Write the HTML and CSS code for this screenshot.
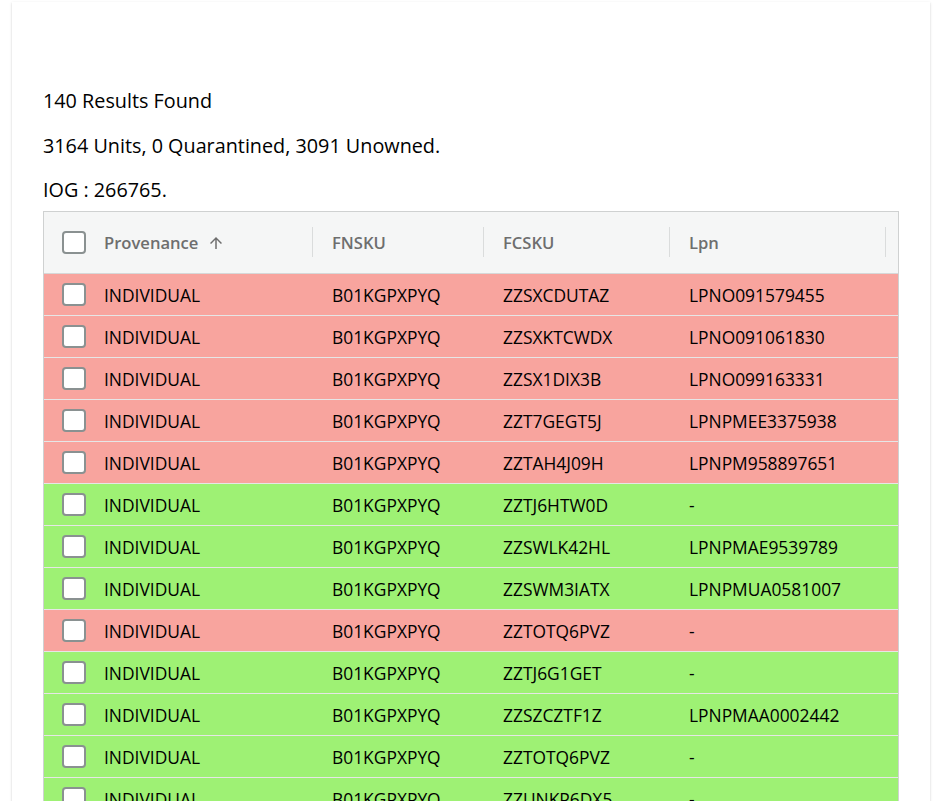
FILE: index.html
```html
<!DOCTYPE html>
<html>
<head>
<meta charset="utf-8">
<link rel="stylesheet" href="styles.css">
</head>
<body>
<div class="page">
  <div class="card">
    <div class="summary">
      <p>140 Results Found</p>
      <p>3164 Units, 0 Quarantined, 3091 Unowned.</p>
      <p>IOG : 266765.</p>
    </div>
    <div class="grid">
      <div class="row head">
        <div class="cell c-check"><span class="box"></span></div>
        <div class="cell c-prov">Provenance<svg class="arrow" viewBox="0 0 24 24" width="18" height="18"><path d="M4 12l1.41 1.41L11 7.83V20h2V7.83l5.58 5.59L20 12l-8-8-8 8z"/></svg><span class="sep"></span></div>
        <div class="cell c-fnsku">FNSKU<span class="sep"></span></div>
        <div class="cell c-fcsku">FCSKU<span class="sep"></span></div>
        <div class="cell c-lpn">Lpn<span class="sep"></span></div>
      </div>
      <div class="row red"><div class="cell c-check"><span class="box"></span></div><div class="cell c-prov">INDIVIDUAL</div><div class="cell c-fnsku">B01KGPXPYQ</div><div class="cell c-fcsku">ZZSXCDUTAZ</div><div class="cell c-lpn">LPNO091579455</div></div>
      <div class="row red"><div class="cell c-check"><span class="box"></span></div><div class="cell c-prov">INDIVIDUAL</div><div class="cell c-fnsku">B01KGPXPYQ</div><div class="cell c-fcsku">ZZSXKTCWDX</div><div class="cell c-lpn">LPNO091061830</div></div>
      <div class="row red"><div class="cell c-check"><span class="box"></span></div><div class="cell c-prov">INDIVIDUAL</div><div class="cell c-fnsku">B01KGPXPYQ</div><div class="cell c-fcsku">ZZSX1DIX3B</div><div class="cell c-lpn">LPNO099163331</div></div>
      <div class="row red"><div class="cell c-check"><span class="box"></span></div><div class="cell c-prov">INDIVIDUAL</div><div class="cell c-fnsku">B01KGPXPYQ</div><div class="cell c-fcsku">ZZT7GEGT5J</div><div class="cell c-lpn">LPNPMEE3375938</div></div>
      <div class="row red"><div class="cell c-check"><span class="box"></span></div><div class="cell c-prov">INDIVIDUAL</div><div class="cell c-fnsku">B01KGPXPYQ</div><div class="cell c-fcsku">ZZTAH4J09H</div><div class="cell c-lpn">LPNPM958897651</div></div>
      <div class="row green"><div class="cell c-check"><span class="box"></span></div><div class="cell c-prov">INDIVIDUAL</div><div class="cell c-fnsku">B01KGPXPYQ</div><div class="cell c-fcsku">ZZTJ6HTW0D</div><div class="cell c-lpn">-</div></div>
      <div class="row green"><div class="cell c-check"><span class="box"></span></div><div class="cell c-prov">INDIVIDUAL</div><div class="cell c-fnsku">B01KGPXPYQ</div><div class="cell c-fcsku">ZZSWLK42HL</div><div class="cell c-lpn">LPNPMAE9539789</div></div>
      <div class="row green"><div class="cell c-check"><span class="box"></span></div><div class="cell c-prov">INDIVIDUAL</div><div class="cell c-fnsku">B01KGPXPYQ</div><div class="cell c-fcsku">ZZSWM3IATX</div><div class="cell c-lpn">LPNPMUA0581007</div></div>
      <div class="row red"><div class="cell c-check"><span class="box"></span></div><div class="cell c-prov">INDIVIDUAL</div><div class="cell c-fnsku">B01KGPXPYQ</div><div class="cell c-fcsku">ZZTOTQ6PVZ</div><div class="cell c-lpn">-</div></div>
      <div class="row green"><div class="cell c-check"><span class="box"></span></div><div class="cell c-prov">INDIVIDUAL</div><div class="cell c-fnsku">B01KGPXPYQ</div><div class="cell c-fcsku">ZZTJ6G1GET</div><div class="cell c-lpn">-</div></div>
      <div class="row green"><div class="cell c-check"><span class="box"></span></div><div class="cell c-prov">INDIVIDUAL</div><div class="cell c-fnsku">B01KGPXPYQ</div><div class="cell c-fcsku">ZZSZCZTF1Z</div><div class="cell c-lpn">LPNPMAA0002442</div></div>
      <div class="row green"><div class="cell c-check"><span class="box"></span></div><div class="cell c-prov">INDIVIDUAL</div><div class="cell c-fnsku">B01KGPXPYQ</div><div class="cell c-fcsku">ZZTOTQ6PVZ</div><div class="cell c-lpn">-</div></div>
      <div class="row green"><div class="cell c-check"><span class="box"></span></div><div class="cell c-prov">INDIVIDUAL</div><div class="cell c-fnsku">B01KGPXPYQ</div><div class="cell c-fcsku">ZZUNKP6DX5</div><div class="cell c-lpn">-</div></div>
    </div>
  </div>
</div>
</body>
</html>
```

FILE: styles.css
```css
html, body {
  margin: 0;
  padding: 0;
  background: #ffffff;
  font-family: "Open Sans", "Noto Sans", sans-serif;
  color: #000000;
}
.page {
  padding: 2px 11px 0 12px;
}
.card {
  background: #ffffff;
  box-shadow: 0 2px 1px -1px rgba(0,0,0,0.2), 0 1px 1px 0 rgba(0,0,0,0.14), 0 1px 3px 0 rgba(0,0,0,0.12);
  padding: 84px 31px 40px 31px;
}
.summary {
  display: flex;
  flex-direction: column;
  gap: 14.5px;
  margin-bottom: 6px;
}
.summary p {
  margin: 0;
  font-size: 19.8px;
  line-height: 30px;
}
.grid {
  border: 1px solid #cfd1d1;
}
.row {
  display: flex;
  height: 41px;
  border-bottom: 1px solid #e6e6e6;
  font-size: 17.4px;
}
.row.head {
  height: 61px;
  background: #f5f6f6;
  border-bottom: 1px solid #d6d8d8;
  color: #6e6e6e;
  font-weight: 600;
  font-size: 16.6px;
}
.row.red { background: #f8a49e; }
.row.green { background: #9ef174; }
.cell {
  display: flex;
  align-items: center;
  position: relative;
  box-sizing: border-box;
  white-space: nowrap;
}
.c-check { width: 60px; padding-left: 18px; }
.c-prov { width: 209px; }
.c-fnsku { width: 171px; padding-left: 19px; }
.c-fcsku { width: 186px; padding-left: 19px; }
.c-lpn { width: 216px; padding-left: 19px; }
.box {
  width: 20px;
  height: 19px;
  border: 2px solid #8a9191;
  border-radius: 4px;
  background: #ffffff;
}
.arrow {
  margin-left: 9px;
  fill: #6e6e6e;
}
.sep {
  position: absolute;
  right: 0;
  top: 15px;
  height: 30px;
  width: 1px;
  background: #dadcdc;
}
```
